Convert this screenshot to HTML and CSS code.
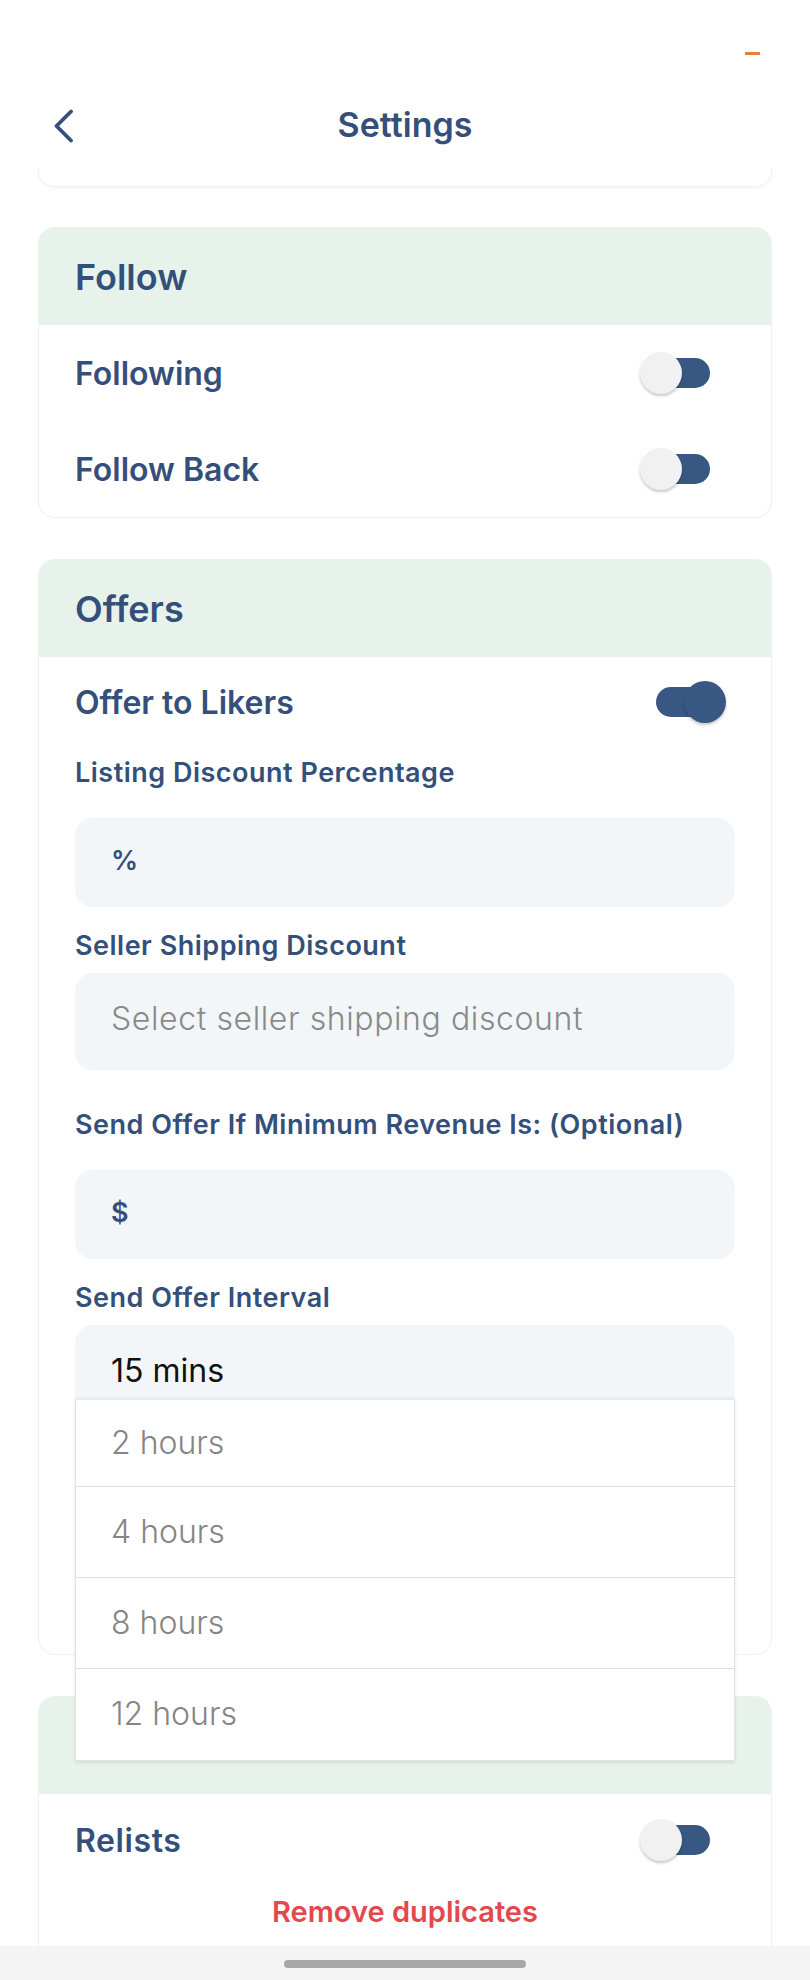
FILE: index.html
```html
<!DOCTYPE html>
<html lang="en">
<head>
    <meta charset="UTF-8">
    <title>Settings</title>
    <link rel="stylesheet" href="styles.css">
</head>
<body>
    <div class="screen">
        <div class="status-bar">
            <span class="status-dash"></span>
        </div>

        <header class="top-bar">
            <button class="back-btn" aria-label="Back">
                <svg width="22" height="34" viewBox="0 0 22 34">
                    <path d="M19 2.5 L4.5 17 L19 31.5" fill="none" stroke="#34507a" stroke-width="3.8" stroke-linecap="round" stroke-linejoin="round"/>
                </svg>
            </button>
            <h1 class="page-title">Settings</h1>
            <span></span>
        </header>
        <div class="card-tail"></div>

        <main class="content">
            <!-- Follow -->
            <section class="card">
                <div class="card-head">Follow</div>
                <div class="card-body">
                    <div class="toggle-row">
                        <span>Following</span>
                        <span class="switch"><span class="track"></span><span class="knob"></span></span>
                    </div>
                    <div class="toggle-row">
                        <span>Follow Back</span>
                        <span class="switch"><span class="track"></span><span class="knob"></span></span>
                    </div>
                </div>
            </section>

            <!-- Offers -->
            <section class="card">
                <div class="card-head">Offers</div>
                <div class="card-body offers-body">
                    <div class="toggle-row short">
                        <span>Offer to Likers</span>
                        <span class="switch on"><span class="track"></span><span class="knob"></span></span>
                    </div>

                    <label class="field-label">Listing Discount Percentage</label>
                    <div class="text-input"><span class="unit">%</span></div>

                    <label class="field-label">Seller Shipping Discount</label>
                    <div class="select-box placeholder">Select seller shipping discount</div>

                    <label class="field-label">Send Offer If Minimum Revenue Is: (Optional)</label>
                    <div class="text-input"><span class="unit">$</span></div>

                    <label class="field-label">Send Offer Interval</label>
                    <div class="dropdown">
                        <div class="select-box open">15 mins</div>
                        <ul class="dropdown-list">
                            <li>2 hours</li>
                            <li>4 hours</li>
                            <li>8 hours</li>
                            <li>12 hours</li>
                        </ul>
                    </div>
                </div>
            </section>

            <!-- Relists -->
            <section class="card">
                <div class="card-head"></div>
                <div class="card-body relist-body">
                    <div class="toggle-row relist-row">
                        <span>Relists</span>
                        <span class="switch"><span class="track"></span><span class="knob"></span></span>
                    </div>
                    <a class="remove-link" href="#">Remove duplicates</a>
                </div>
            </section>
        </main>

        <div class="nav-bar"><span class="nav-handle"></span></div>
    </div>
</body>
</html>
```

FILE: styles.css
```css
* {
    box-sizing: border-box;
}
body {
    margin: 0;
    padding: 0;
    background: #ffffff;
    font-family: 'Inter', 'Liberation Sans', sans-serif;
    color: #34507a;
}
.screen {
    position: relative;
    width: 810px;
    height: 1980px;
    overflow: hidden;
    background: #ffffff;
}
.status-bar {
    height: 80px;
    display: flex;
    justify-content: flex-end;
    padding: 52px 50px 0 0;
}
.status-dash {
    width: 15px;
    height: 3px;
    background: #ea7b3c;
}
.top-bar {
    height: 88px;
    display: grid;
    grid-template-columns: 1fr auto 1fr;
    align-items: center;
    padding: 0 52px;
}
.back-btn {
    border: none;
    background: none;
    padding: 0;
    width: 22px;
    height: 34px;
    margin-top: 4px;
}
.page-title {
    margin: 0;
    font-size: 34px;
    font-weight: 600;
    color: #34507a;
}
.card-tail {
    height: 19px;
    margin: 0 38px;
    border: 1px solid #eef0f3;
    border-top: none;
    border-radius: 0 0 16px 16px;
    box-shadow: 0 2px 3px rgba(0, 0, 0, 0.03);
}
.content {
    display: flex;
    flex-direction: column;
    gap: 41px;
    padding: 40px 38px 0;
}
.card {
    border: 1px solid #eef0f3;
    border-radius: 16px;
    background: #ffffff;
}
.card-head {
    height: 97px;
    background: #e6f2ea;
    border-radius: 15px 15px 0 0;
    display: flex;
    align-items: center;
    padding-left: 36px;
    font-size: 36px;
    font-weight: 600;
    color: #34507a;
}
.card-body {
    padding: 0 36px;
}
.toggle-row {
    height: 96px;
    display: flex;
    align-items: center;
    justify-content: space-between;
    font-size: 32px;
    font-weight: 600;
}
.toggle-row.short {
    height: 90px;
}
.relist-row {
    height: 92px;
    letter-spacing: 0.6px;
}
.switch {
    position: relative;
    width: 88px;
    height: 42px;
    margin-right: 7px;
}
.switch .track {
    position: absolute;
    left: 16px;
    top: 6px;
    width: 54px;
    height: 30px;
    border-radius: 15px;
    background: #385782;
}
.switch .knob {
    position: absolute;
    left: 0;
    top: 0;
    width: 42px;
    height: 42px;
    border-radius: 50%;
    background: #f1f1f2;
    box-shadow: 0 2px 3px rgba(0, 0, 0, 0.22);
}
.switch.on .knob {
    left: 44px;
    background: #385782;
}
.offers-body {
    padding-bottom: 232px;
}
.relist-body {
    padding-bottom: 80px;
}
.field-label {
    display: block;
    height: 30px;
    line-height: 30px;
    font-size: 27px;
    font-weight: 600;
    letter-spacing: 0.5px;
    margin-top: 11px;
}
.text-input {
    height: 89px;
    margin: 30px 0 24px;
    background: #f3f6f9;
    border-radius: 18px;
    display: flex;
    align-items: center;
    padding: 0 0 4px 36px;
}
.unit {
    font-size: 27px;
    font-weight: 600;
    color: #34507a;
}
.select-box {
    height: 97px;
    margin: 12px 0 40px;
    background: #f3f6f9;
    border-radius: 18px;
    padding: 31px 0 0 36px;
    line-height: 30px;
    font-size: 32px;
    color: #111111;
}
.select-box.placeholder {
    color: #8a8a8a;
    font-weight: 300;
    letter-spacing: 0.6px;
}
.dropdown {
    position: relative;
}
.select-box.open {
    margin: 12px 0 0;
}
.dropdown-list {
    position: absolute;
    left: 0;
    right: 0;
    top: 75px;
    margin: 0;
    padding: 0;
    list-style: none;
    background: #ffffff;
    border: 1px solid #e3e3e3;
    border-top: none;
    box-shadow: 0 -2px 3px rgba(0, 0, 0, 0.06), 0 2px 3px rgba(0, 0, 0, 0.08);
    z-index: 5;
}
.dropdown-list li {
    height: 91px;
    display: flex;
    align-items: center;
    padding: 0 0 2px 35px;
    font-size: 32px;
    font-weight: 300;
    color: #858585;
    border-bottom: 1px solid #dedede;
}
.dropdown-list li:first-child {
    height: 87px;
}
.dropdown-list li:last-child {
    border-bottom: none;
}
.remove-link {
    display: block;
    margin-top: 11px;
    line-height: 30px;
    text-align: center;
    font-size: 29px;
    font-weight: 600;
    color: #e4474c;
    text-decoration: none;
}
.nav-bar {
    position: absolute;
    left: 0;
    right: 0;
    bottom: 0;
    height: 34px;
    background: #f4f4f4;
    display: flex;
    justify-content: center;
    padding-top: 14px;
}
.nav-handle {
    width: 242px;
    height: 8px;
    border-radius: 4px;
    background: #a7a7a7;
}
```
